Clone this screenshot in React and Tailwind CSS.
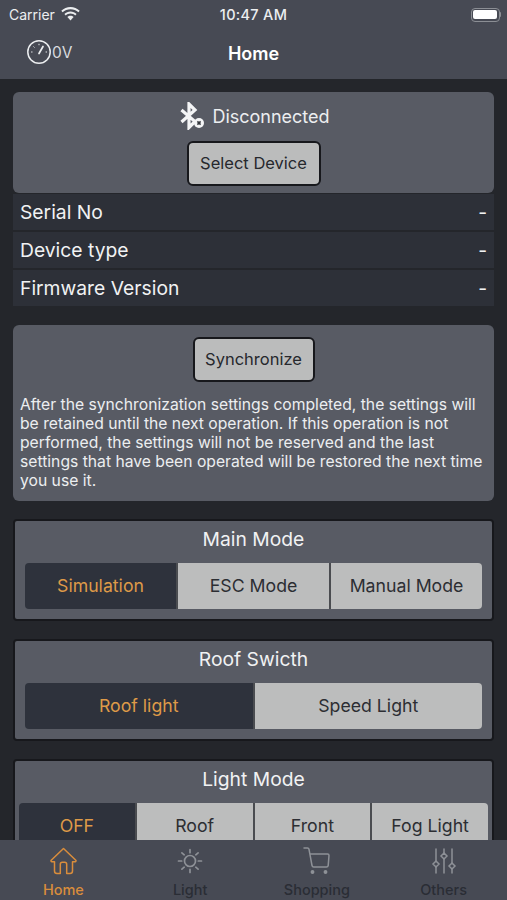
import React from 'react';

const Gauge = () => (
  <svg width="26" height="26" viewBox="0 0 26 26" fill="none" stroke="#eceef0" strokeLinecap="round">
    <circle cx="13" cy="13" r="11.2" strokeWidth="1.5" />
    <path d="M13 14.5 17 7.5" strokeWidth="1.7" />
    <path d="M5.5 13h.6M7.8 7.8l.4.4M13 5.2v.6M20 13h.6" strokeWidth="1" />
  </svg>
);

const Wifi = () => (
  <svg width="19" height="15" viewBox="0 0 19 15" fill="#eceef0">
    <path d="M9.5 2.2c3 0 5.8 1.1 7.9 3.1l1.3-1.5C16.2 1.4 13 0 9.5 0S2.8 1.4.3 3.8l1.3 1.5c2.1-2 4.9-3.1 7.9-3.1Z" />
    <path d="M9.5 6.6c1.8 0 3.4.7 4.7 1.8l1.4-1.5C14 5.400 11.800 4.400 9.500 4.400S5 5.400 3.400 6.900l1.400 1.500C6.100 7.300 7.700 6.600 9.500 6.600Z" />
    <path d="M9.500 8.800c-1.200 0-2.300.5-3.100 1.200l3.100 3.400 3.100-3.400c-.8-.7-1.900-1.200-3.100-1.200Z" />
  </svg>
);

const Battery = () => (
  <div className="flex items-center">
    <div className="flex h-[14px] w-[29px] items-center rounded-[4px] border border-[#8b8e94] p-[1.5px]">
      <div className="h-full w-full rounded-[2px] bg-white" />
    </div>
    <div className="h-[5px] w-[1.5px] rounded-r-sm bg-[#8b8e94]" />
  </div>
);

const BluetoothOff = () => (
  <svg width="27" height="28" viewBox="-2 0 27 28" fill="none">
    <path d="M2.500 8 16 19.500 10 25.500V2l6 6L2.500 20" stroke="#f4f5f6" strokeWidth="3.200" />
    <circle cx="20" cy="21" r="5" fill="#f4f5f6" />
    <path d="m18.400 19.400 3.200 3.200m0-3.200-3.200 3.200" stroke="#33363c" strokeWidth="1.500" />
  </svg>
);

const HomeIcon = () => (
  <svg width="27" height="28" viewBox="0 0 27 28" fill="none" stroke="#d98d3c" strokeWidth="1.500" strokeLinejoin="round">
    <path d="M13.500 1.500 1.200 13.300c-.5.600-.1 1.400.6 1.400h2.700v9.200c0 1.500 1 2.500 2.500 2.500h3.300v-9c0-1.300.8-2.100 2-2.100h2.400c1.200 0 2 .8 2 2.100v9h3.300c1.500 0 2.500-1 2.500-2.500v-9.200h2.700c.7 0 1.100-.8.600-1.400L13.500 1.500Z" />
  </svg>
);

const SunIcon = () => (
  <svg width="26" height="26" viewBox="0 0 26 26" fill="none" stroke="#8e9197" strokeWidth="1.700" strokeLinecap="round">
    <circle cx="13" cy="13" r="5.500" />
    <path d="M13 1.500v3.200M13 21.300v3.200M1.500 13h3.200M21.300 13h3.200M4.900 4.900l2.300 1.900M18.800 19.200l2.300 1.900M21.100 4.900l-2.300 1.900M7.200 19.200l-2.300 1.900" />
  </svg>
);

const CartIcon = () => (
  <svg width="28" height="28" viewBox="0 0 28 28" fill="none" stroke="#8e9197" strokeWidth="1.500" strokeLinecap="round" strokeLinejoin="round">
    <path d="M1 1h3.500c.8 0 1.300.5 1.500 1.300l3 16.200c.2 1 .8 1.500 1.700 1.500h12.800c1 0 1.500-.5 1.700-1.400l.8-10.100c0-1-.5-1.500-1.400-1.500H7" />
    <circle cx="9.500" cy="25" r="1.200" fill="#8e9197" />
    <circle cx="22.500" cy="25" r="1.200" fill="#8e9197" />
  </svg>
);

const SlidersIcon = () => (
  <svg width="26" height="26" viewBox="0 0 26 26" fill="none" stroke="#8e9197" strokeWidth="1.500" strokeLinecap="round">
    <path d="M5 1v12M5 19v6M13 1v4M13 11v14M21 1v14M21 21v4" />
    <path d="m5 13 3 3-3 3-3-3 3-3ZM13 5l3 3-3 3-3-3 3-3ZM21 15l3 3-3 3-3-3 3-3Z" />
  </svg>
);

const InfoRow = ({ label }) => (
  <div className="flex h-[36px] items-center justify-between bg-[#2d3038] px-[7px] pt-[1px] text-[19.300px] text-[#f1f2f3]">
    <span>{label}</span>
    <span>-</span>
  </div>
);

const GreyButton = ({ children, className }) => (
  <button className={`rounded-[6px] border-2 border-[#17181c] bg-[#bbbcbc] text-[16.500px] text-[#26282d] ${className}`}>
    {children}
  </button>
);

const Segments = ({ items }) => (
  <div className="flex h-[46px] overflow-hidden rounded-[4px] text-[17.700px]">
    {items.map((item, i) => (
      <div
        key={item}
        className={
          i === 0
            ? 'flex flex-1 items-center justify-center bg-[#2e323c] text-[#de9a48]'
            : 'flex flex-1 items-center justify-center border-l-2 border-[#4a4c50] bg-[#bcbdbd] text-[#2c2e33]'
        }
      >
        {item}
      </div>
    ))}
  </div>
);

const ModeCard = ({ title, items, className }) => (
  <section className={`mx-[13px] h-[102px] rounded-[4px] border-2 border-[#17181c] bg-[#585b64] ${className}`}>
    <h2 className="flex h-[42px] items-center justify-center pb-[5px] text-[19.300px] text-[#f1f2f3]">{title}</h2>
    <Segments items={items} />
  </section>
);

const TabItem = ({ icon, label, active }) => (
  <div className="flex flex-1 flex-col items-center">
    <div className="flex h-[32px] items-center justify-center pt-[9px]">{icon}</div>
    <span className={`mt-[9px] text-[14.500px] font-medium leading-[18px] ${active ? 'text-[#d98d3c]' : 'text-[#2a2d35]'}`}>
      {label}
    </span>
  </div>
);

export default function App() {
  return (
    <div className="relative flex h-[900px] w-[507px] flex-col overflow-hidden bg-[#24262b] font-['Inter',sans-serif]">
      <header className="h-[79px] shrink-0 bg-[#474a54] text-[#eceef0]">
        <div className="flex h-[28px] items-center justify-between pl-[9px] pr-[6px] pt-[1px]">
          <div className="flex items-center gap-[6px] text-[14px]">
            <span>Carrier</span>
            <Wifi />
          </div>
          <span className="absolute left-0 right-0 text-center text-[14.500px] font-medium tracking-[0.3px]">10:47 AM</span>
          <Battery />
        </div>
        <div className="relative flex h-[51px] items-center justify-center">
          <div className="absolute left-[26px] top-[11px] flex items-center">
            <Gauge />
            <span className="pt-[2px] text-[15.500px] text-[#d9dbde]">0V</span>
          </div>
          <h1 className="text-[18px] font-semibold text-white">Home</h1>
        </div>
      </header>

      <main className="min-h-0 flex-1 overflow-hidden pt-[13px]">
        <section className="mx-[13px]">
          <div className="flex h-[101px] flex-col items-center rounded-[6px] bg-[#585b64] pt-[10px]">
            <div className="flex h-[28px] items-center gap-[8px]">
              <BluetoothOff />
              <span className="text-[18px] text-[#eceef0]">Disconnected</span>
            </div>
            <GreyButton className="mt-[11px] h-[45px] w-[134px]">Select Device</GreyButton>
          </div>
          <div className="mt-[1px] flex flex-col gap-[2px]">
            <InfoRow label="Serial No" />
            <InfoRow label="Device type" />
            <InfoRow label="Firmware Version" />
          </div>
        </section>

        <section className="mx-[13px] mt-[19px] flex h-[176px] flex-col items-center rounded-[6px] bg-[#585b64] px-[7px] pt-[12px]">
          <GreyButton className="h-[45px] w-[122px]">Synchronize</GreyButton>
          <p className="mt-[13px] text-[15.700px] leading-[19px] text-[#eceef0]">
            After the synchronization settings completed, the settings will be retained until the next operation. If this operation is not performed, the settings will not be reserved and the last settings that have been operated will be restored the next time you use it.
          </p>
        </section>

        <div className="mt-[18px] flex flex-col gap-[18px]">
          <ModeCard title="Main Mode" items={['Simulation', 'ESC Mode', 'Manual Mode']} className="px-[10px]" />
          <ModeCard title="Roof Swicth" items={['Roof light', 'Speed Light']} className="px-[10px]" />
          <ModeCard title="Light Mode" items={['OFF', 'Roof', 'Front', 'Fog Light']} className="px-[4px]" />
        </div>
      </main>

      <nav className="flex h-[60px] shrink-0 bg-[#474a54]">
        <TabItem icon={<HomeIcon />} label="Home" active />
        <TabItem icon={<SunIcon />} label="Light" />
        <TabItem icon={<CartIcon />} label="Shopping" />
        <TabItem icon={<SlidersIcon />} label="Others" />
      </nav>
    </div>
  );
}
